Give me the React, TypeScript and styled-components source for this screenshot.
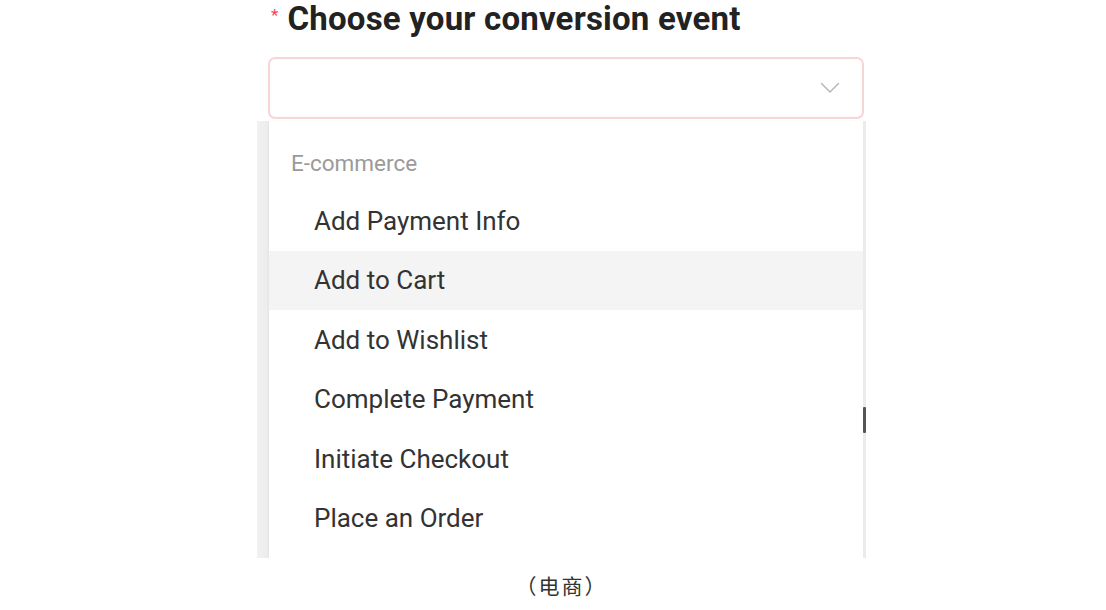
import React from 'react'
import styled, { createGlobalStyle } from 'styled-components'

const GlobalStyle = createGlobalStyle`
  html, body {
    margin: 0;
    padding: 0;
    background: #ffffff;
  }
  body {
    font-family: Roboto, "Noto Sans", "Liberation Sans", sans-serif;
    color: #333333;
  }
`

const EVENTS = [
    'Add Payment Info',
    'Add to Cart',
    'Add to Wishlist',
    'Complete Payment',
    'Initiate Checkout',
    'Place an Order',
]

const HOVERED = 'Add to Cart'

const Chevron = () => (
    <svg width="20" height="12" viewBox="0 0 20 12" fill="none">
        <path d="M1.5 1.5 L10 10 L18.5 1.5" stroke="#b8b8b8" strokeWidth="1.5" strokeLinecap="round" strokeLinejoin="round" />
    </svg>
)

const App: React.FunctionComponent = () => (
    <Page>
        <GlobalStyle />
        <Figure>
            <Title>
                <Required>*</Required>
                Choose your conversion event
            </Title>
            <SelectBox>
                <Chevron />
            </SelectBox>
            <Stage>
                <Panel>
                    <GroupLabel>E-commerce</GroupLabel>
                    { EVENTS.map((name) => (
                        <Option key={ name } active={ name === HOVERED }>{ name }</Option>
                    )) }
                </Panel>
                <ScrollTrack>
                    <ScrollThumb />
                </ScrollTrack>
            </Stage>
        </Figure>
        <Caption>（电商）</Caption>
    </Page>
)

export default App

const Page = styled.div`
  width: 1106px;
  display: flex;
  flex-direction: column;
  padding-left: 257px;
  box-sizing: border-box;
`

const Figure = styled.div`
  width: 609px;
  height: 558px;
  display: flex;
  flex-direction: column;
  overflow: hidden;
`

const Title = styled.div`
  flex: none;
  display: flex;
  align-items: flex-start;
  height: 57px;
  padding-left: 14px;
  box-sizing: border-box;
  font-family: Roboto, "Liberation Sans", sans-serif;
  font-weight: 700;
  font-size: 33px;
  line-height: 38px;
  color: #222222;
  letter-spacing: 0.2px;
`

const Required = styled.span`
  color: #f0455c;
  font-size: 17px;
  line-height: 30px;
  font-weight: 400;
  margin-right: 9px;
`

const SelectBox = styled.div`
  flex: none;
  margin-left: 11px;
  width: 596px;
  height: 62px;
  box-sizing: border-box;
  border: 2.5px solid #f7d6da;
  border-radius: 7px;
  display: flex;
  align-items: center;
  justify-content: flex-end;
  padding-right: 22px;
  background: #ffffff;
  box-shadow: inset 0 0 3px rgba(0, 0, 0, 0.04);
`

const Stage = styled.div`
  flex: 1;
  min-height: 0;
  display: flex;
  margin-top: 2px;
  padding-left: 12px;
  background: linear-gradient(to right, #f1f1f1, #ececec 12px, #ffffff 12px);
`

const Panel = styled.div`
  flex: 1;
  background: #ffffff;
  padding-top: 22px;
  display: flex;
  flex-direction: column;
  box-shadow: -1px 0 2px rgba(0, 0, 0, 0.04);
`

const GroupLabel = styled.div`
  flex: none;
  height: 48px;
  line-height: 40px;
  padding-left: 22px;
  font-size: 22.5px;
  color: #9a9a9a;
`

const Option = styled.div<{ active?: boolean }>`
  flex: none;
  height: 59.5px;
  display: flex;
  align-items: center;
  padding-left: 45px;
  font-size: 26px;
  color: #333333;
  background: ${ props => props.active ? '#f4f4f4' : '#ffffff' };
`

const ScrollTrack = styled.div`
  width: 3px;
  background: #ebebeb;
  display: flex;
  flex-direction: column;
`

const ScrollThumb = styled.div`
  margin-top: 286px;
  height: 26px;
  background: #555555;
  border-radius: 1px;
`

const Caption = styled.div`
  width: 609px;
  margin-top: 14px;
  text-align: center;
  font-family: "Noto Sans CJK SC", "Noto Sans", sans-serif;
  font-size: 21px;
  letter-spacing: 2px;
  line-height: 26px;
  color: #333333;
`
